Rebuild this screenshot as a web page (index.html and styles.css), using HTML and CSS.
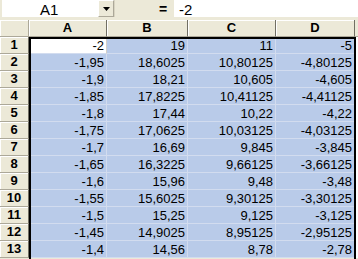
FILE: index.html
```html
<!DOCTYPE html>
<html>
<head>
<meta charset="utf-8">
<link rel="stylesheet" href="styles.css">
</head>
<body>
<div class="app">
  <div class="fbar">
    <div class="namebox">
      <div class="name">A1</div>
      <div class="dd"><svg width="7" height="4" viewBox="0 0 7 4"><path d="M0 0H7L3.5 4Z" fill="#000"/></svg></div>
    </div>
    <div class="eq">=</div>
    <div class="input">-2</div>
  </div>
  <div class="sheet">
    <div class="corner"></div>
    <div class="ch">A</div><div class="ch">B</div><div class="ch">C</div><div class="ch">D</div>
    <div class="fill"></div>
    <div class="rh r1">1</div><div class="rh">2</div><div class="rh">3</div><div class="rh">4</div><div class="rh">5</div><div class="rh">6</div><div class="rh">7</div><div class="rh">8</div><div class="rh">9</div><div class="rh">10</div><div class="rh">11</div><div class="rh">12</div><div class="rh">13</div>
    <div class="range">
      <div class="c active">-2</div><div class="c">19</div><div class="c">11</div><div class="c">-5</div>
      <div class="c">-1,95</div><div class="c">18,6025</div><div class="c">10,80125</div><div class="c">-4,80125</div>
      <div class="c">-1,9</div><div class="c">18,21</div><div class="c">10,605</div><div class="c">-4,605</div>
      <div class="c">-1,85</div><div class="c">17,8225</div><div class="c">10,41125</div><div class="c">-4,41125</div>
      <div class="c">-1,8</div><div class="c">17,44</div><div class="c">10,22</div><div class="c">-4,22</div>
      <div class="c">-1,75</div><div class="c">17,0625</div><div class="c">10,03125</div><div class="c">-4,03125</div>
      <div class="c">-1,7</div><div class="c">16,69</div><div class="c">9,845</div><div class="c">-3,845</div>
      <div class="c">-1,65</div><div class="c">16,3225</div><div class="c">9,66125</div><div class="c">-3,66125</div>
      <div class="c">-1,6</div><div class="c">15,96</div><div class="c">9,48</div><div class="c">-3,48</div>
      <div class="c">-1,55</div><div class="c">15,6025</div><div class="c">9,30125</div><div class="c">-3,30125</div>
      <div class="c">-1,5</div><div class="c">15,25</div><div class="c">9,125</div><div class="c">-3,125</div>
      <div class="c">-1,45</div><div class="c">14,9025</div><div class="c">8,95125</div><div class="c">-2,95125</div>
      <div class="c">-1,4</div><div class="c">14,56</div><div class="c">8,78</div><div class="c">-2,78</div>
    </div>
    <div class="side"></div>
  </div>
</div>
</body>
</html>
```
FILE: styles.css
```css
html, body {
  margin: 0;
  padding: 0;
}
body {
  width: 358px;
  height: 259px;
  overflow: hidden;
  background: #ece9d8;
  font-family: "Liberation Sans", Arial, sans-serif;
  color: #000;
}
.app {
  display: flex;
  flex-direction: column;
}
.fbar {
  display: flex;
  height: 20px;
  box-sizing: border-box;
  padding-bottom: 3px;
  background: #ece9d8;
}
.namebox {
  display: flex;
  width: 114px;
  box-sizing: border-box;
  padding-left: 2px;
}
.name {
  flex: 1;
  background: #fff;
  font-size: 15px;
  line-height: 19px;
  height: 17px;
  padding-left: 38px;
  overflow: hidden;
}
.dd {
  width: 16px;
  box-sizing: border-box;
  background: #ece9d8;
  border-top: 1px solid #fff;
  border-left: 1px solid #fff;
  border-right: 1px solid #aca899;
  border-bottom: 1px solid #aca899;
  display: flex;
  align-items: center;
  justify-content: center;
  padding-top: 1px;
}
.eq {
  width: 60px;
  box-sizing: border-box;
  padding-left: 44px;
  font-weight: bold;
  font-size: 14px;
  line-height: 18px;
  border-left: 1px solid #d8d4c2;
}
.input {
  flex: 1;
  background: #fff;
  padding-left: 5px;
  font-size: 15px;
  line-height: 19px;
  height: 17px;
  overflow: hidden;
}
.sheet {
  display: grid;
  grid-template-columns: 29px 78px 81px 88px 79px 3px;
  grid-template-rows: 17px repeat(13, 17px);
}
.corner, .ch, .rh {
  box-sizing: border-box;
  background: #ece9d8;
  border-right: 1px solid #aca899;
  border-bottom: 1px solid #aca899;
  box-shadow: inset 1px 1px 0 #fff;
  font-weight: bold;
  font-size: 13px;
  line-height: 16px;
  text-align: center;
}
.corner {
  grid-column: 1;
  grid-row: 1;
}
.ch {
  grid-row: 1;
  border-right-color: #716f64;
}
.fill {
  grid-column: 6;
  grid-row: 1;
  background: #ece9d8;
  border-bottom: 1px solid #aca899;
}
.rh {
  grid-column: 1;
  border-right-color: #716f64;
}
.r1 {
  grid-row: 2;
}
.range {
  grid-column: 2 / 6;
  grid-row: 2 / 15;
  display: grid;
  grid-template-columns: 78px 81px 88px 79px;
  grid-auto-rows: 17px;
  position: relative;
}
.range::after {
  content: "";
  position: absolute;
  left: 0;
  top: 0;
  right: -1px;
  bottom: -6px;
  border: 2px solid #000;
  pointer-events: none;
}
.side {
  grid-column: 6;
  grid-row: 2 / 15;
  background: #fff;
}
.c {
  box-sizing: border-box;
  background: #b9cbe9;
  border-right: 1px solid #d2dcef;
  border-bottom: 1px solid #d2dcef;
  font-size: 13px;
  line-height: 17px;
  text-align: right;
  padding-right: 2px;
  white-space: nowrap;
  overflow: hidden;
}
.c.active {
  background: #fff;
  border-right-color: #d4d0c8;
}
```
